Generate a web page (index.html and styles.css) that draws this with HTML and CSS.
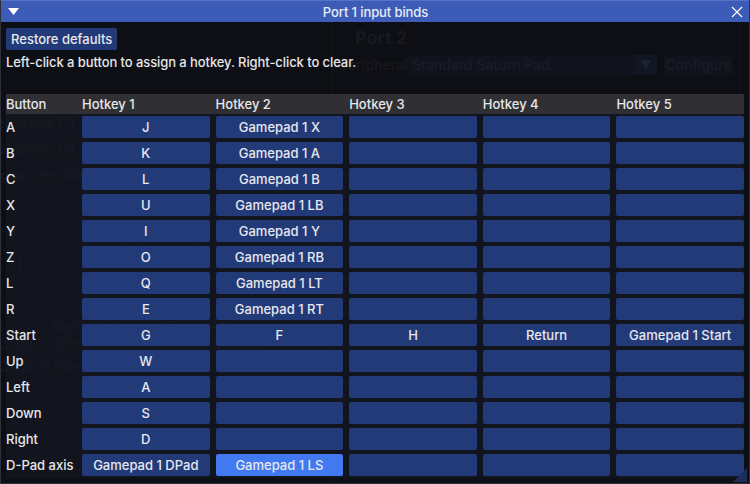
FILE: index.html
```html
<!DOCTYPE html>
<html>
<head>
<meta charset="utf-8">
<link rel="stylesheet" href="styles.css">
</head>
<body>
<div class="ghost" aria-hidden="true">
  <div class="g-vline g-vl1"></div>
  <div class="g-vline g-vl2"></div>
  <div class="g-port">Port 2</div>
  <div class="g-periph">Peripheral:</div>
  <div class="g-combo"><span>Standard Saturn Pad</span><span class="g-arrow">▼</span></div>
  <div class="g-config">Configure</div>
  <div class="g-label g-l1">Deadzone (?)</div>
  <div class="g-label g-l2">Deadzone (?)</div>
  <div class="g-label g-l3">Digital sensitivity (?)</div>
  <div class="g-circle g-c1"></div>
  <div class="g-circle g-c2"></div>
  <div class="g-box"></div>
  <div class="g-label g-rs">Right Stick</div>
  <div class="g-label g-lt">LT</div>
  <div class="g-label g-rt">RT</div>
  <div class="g-label g-v1">0.08) -0.09x0.10 (2.14) &nbsp;0.00% &nbsp;&nbsp;0.00%</div>
  <div class="g-label g-v2">0.00) &nbsp;0.00x0.00 (0.00)</div>
</div>

<div class="window">
  <div class="titlebar">
    <svg class="collapse" width="12" height="10" viewBox="0 0 12 10"><polygon points="0,1 11,1 5.5,8" fill="#ffffff"/></svg>
    <span class="title">Port 1 input binds</span>
    <svg class="close" width="12" height="12" viewBox="0 0 12 12"><path d="M1 1 L11 11 M11 1 L1 11" stroke="#ffffff" stroke-width="1.2" fill="none"/></svg>
  </div>
  <div class="content">
    <div class="btn restore">Restore defaults</div>
    <div class="hint">Left-click a button to assign a hotkey. Right-click to clear.</div>
    <div class="table">
      <div class="thead">
        <div>Button</div><div>Hotkey 1</div><div>Hotkey 2</div><div>Hotkey 3</div><div>Hotkey 4</div><div>Hotkey 5</div>
      </div>
      <div class="tbody">
        <div class="row"><div class="lbl">A</div><div class="btn">J</div><div class="btn">Gamepad 1 X</div><div class="btn"></div><div class="btn"></div><div class="btn"></div></div>
        <div class="row"><div class="lbl">B</div><div class="btn">K</div><div class="btn">Gamepad 1 A</div><div class="btn"></div><div class="btn"></div><div class="btn"></div></div>
        <div class="row"><div class="lbl">C</div><div class="btn">L</div><div class="btn">Gamepad 1 B</div><div class="btn"></div><div class="btn"></div><div class="btn"></div></div>
        <div class="row"><div class="lbl">X</div><div class="btn">U</div><div class="btn">Gamepad 1 LB</div><div class="btn"></div><div class="btn"></div><div class="btn"></div></div>
        <div class="row"><div class="lbl">Y</div><div class="btn">I</div><div class="btn">Gamepad 1 Y</div><div class="btn"></div><div class="btn"></div><div class="btn"></div></div>
        <div class="row"><div class="lbl">Z</div><div class="btn">O</div><div class="btn">Gamepad 1 RB</div><div class="btn"></div><div class="btn"></div><div class="btn"></div></div>
        <div class="row"><div class="lbl">L</div><div class="btn">Q</div><div class="btn">Gamepad 1 LT</div><div class="btn"></div><div class="btn"></div><div class="btn"></div></div>
        <div class="row"><div class="lbl">R</div><div class="btn">E</div><div class="btn">Gamepad 1 RT</div><div class="btn"></div><div class="btn"></div><div class="btn"></div></div>
        <div class="row"><div class="lbl">Start</div><div class="btn">G</div><div class="btn">F</div><div class="btn">H</div><div class="btn">Return</div><div class="btn">Gamepad 1 Start</div></div>
        <div class="row"><div class="lbl">Up</div><div class="btn">W</div><div class="btn"></div><div class="btn"></div><div class="btn"></div><div class="btn"></div></div>
        <div class="row"><div class="lbl">Left</div><div class="btn">A</div><div class="btn"></div><div class="btn"></div><div class="btn"></div><div class="btn"></div></div>
        <div class="row"><div class="lbl">Down</div><div class="btn">S</div><div class="btn"></div><div class="btn"></div><div class="btn"></div><div class="btn"></div></div>
        <div class="row"><div class="lbl">Right</div><div class="btn">D</div><div class="btn"></div><div class="btn"></div><div class="btn"></div><div class="btn"></div></div>
        <div class="row"><div class="lbl">D-Pad axis</div><div class="btn">Gamepad 1 DPad</div><div class="btn active">Gamepad 1 LS</div><div class="btn"></div><div class="btn"></div><div class="btn"></div></div>
      </div>
    </div>
  </div>
  <svg class="grip" width="14" height="14" viewBox="0 0 14 14"><polygon points="14,0 14,14 0,14" fill="#1e2d5a"/></svg>
</div>
</body>
</html>
```

FILE: styles.css
```css
* { box-sizing: border-box; }
html, body { margin: 0; padding: 0; }
body {
  width: 750px;
  height: 484px;
  overflow: hidden;
  background: #0e0f15;
  font-family: Inter, "Noto Sans", sans-serif;
  font-size: 13px;
  font-weight: 500;
  color: #e6e7ea;
  position: relative;
}

/* faint underlying window, seen through the modal */
.ghost { position: absolute; inset: 0; z-index: 0; color: #17181e; font-size: 14px; }
.ghost > div { position: absolute; white-space: nowrap; }
.g-vline { width: 1px; background: #131519; top: 22px; bottom: 0; }
.g-vl1 { left: 332px; }
.g-vl2 { left: 739px; }
.g-port { left: 355px; top: 27px; font-size: 18px; font-weight: 700; color: #18191e; }
.g-periph { left: 339px; top: 56px; }
.g-combo { left: 407px; top: 55px; width: 250px; height: 20px; background: #10131c; padding: 1px 5px; color: #191d28; }
.g-arrow { position: absolute; right: 0; top: 0; width: 22px; height: 20px; background: #121624; text-align: center; font-size: 12px; line-height: 20px; color: #1d2130; }
.g-config { left: 664px; top: 55px; width: 69px; height: 20px; background: #10131c; text-align: center; line-height: 20px; color: #191d28; }
.g-l1 { left: -14px; top: 114px; }
.g-l2 { left: -14px; top: 140px; }
.g-l3 { left: -14px; top: 166px; }
.g-circle { border: 1px solid #15181f; border-radius: 50%; }
.g-c1 { left: 41px; top: 220px; width: 87px; height: 87px; }
.g-c2 { left: -70px; top: 220px; width: 91px; height: 91px; }
.g-box { left: 143px; top: 236px; width: 50px; height: 80px; border: 1px solid #14171e; }
.g-rs { left: 52px; top: 318px; }
.g-lt { left: 160px; top: 318px; }
.g-rt { left: 210px; top: 318px; }
.g-v1 { left: -2px; top: 335px; }
.g-v2 { left: -2px; top: 358px; }

/* window */
.window {
  position: relative;
  z-index: 1;
  width: 750px;
  height: 484px;
  border: 1px solid #2e303a;
  border-top: none;
  display: flex;
  flex-direction: column;
}
.titlebar {
  height: 22px;
  background: #3c5cb8;
  border-top: 1px solid #5573c8;
  display: flex;
  align-items: center;
  justify-content: space-between;
  padding: 0 6px 0 7px;
  flex-shrink: 0;
}
.title { color: #e8ecf6; font-size: 13px; letter-spacing: -0.1px; }
.collapse { margin-top: 1px; }
.close { margin-top: 1px; }

.content {
  padding: 6px 5px 0 5px;
  display: flex;
  flex-direction: column;
  flex: 1;
}
.btn {
  background: #233a79;
  border-radius: 2px;
  height: 22px;
  display: flex;
  align-items: center;
  justify-content: center;
  white-space: nowrap;
  color: #e6e8ee;
}
.btn.active { background: #4179f1; }
.restore { align-self: flex-start; padding: 0 5px; }
.hint { margin-top: 4px; line-height: 16px; letter-spacing: -0.08px; }

.table { margin-top: 24px; }
.thead, .row {
  display: grid;
  grid-template-columns: 70px repeat(5, 1fr);
  column-gap: 6px;
}
.thead {
  background: #303034;
  height: 20px;
  align-items: center;
  line-height: 20px;
}
.tbody { background: rgba(22, 27, 38, 0.55); }
.row { padding: 2px 0; height: 26px; }
.lbl { display: flex; align-items: center; }

.grip { position: absolute; right: 2px; bottom: 1px; }
```
